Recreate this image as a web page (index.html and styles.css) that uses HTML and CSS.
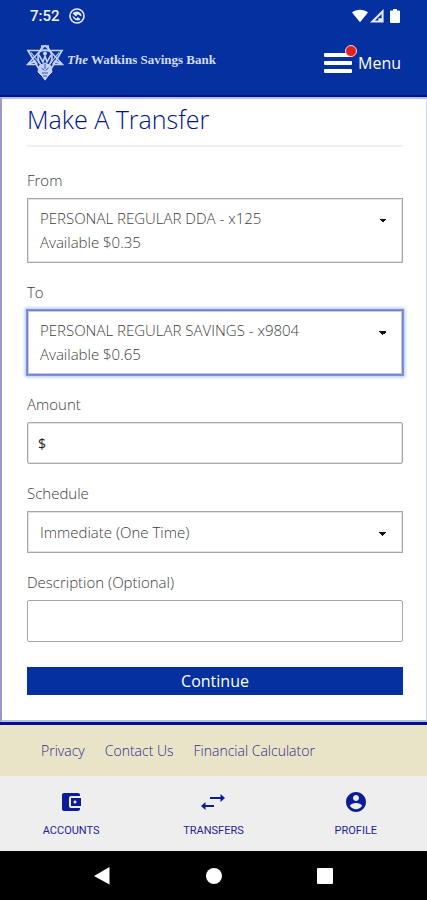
FILE: index.html
```html
<!DOCTYPE html>
<html lang="en">
<head>
    <meta charset="UTF-8">
    <meta name="viewport" content="width=device-width, initial-scale=1.0">
    <title>Make A Transfer</title>
    <link rel="stylesheet" href="styles.css">
</head>
<body>
    <header class="header">
        <!-- Phone status bar -->
        <div class="status-bar">
            <span class="time">7:52</span>
            <svg class="status-dnd" width="16" height="16" viewBox="0 0 16 16">
                <circle cx="8" cy="8" r="7" fill="none" stroke="#e6ecff" stroke-width="1.6"/>
                <path d="M3.6 5.6A5 5 0 0 1 12.6 8.6L8.8 6.2 7 8.4z" fill="#e6ecff"/>
                <path d="M3.4 7.6l3.8 3.2 1.6-1.8 2.8 2.2A5 5 0 0 1 3.4 7.6z" fill="#e6ecff"/>
            </svg>
            <div class="status-icons">
                <svg width="16" height="14" viewBox="0 0 16 14">
                    <path d="M0 3.6C4.4-.2 11.600-.2 16 3.600L8 13.200z" fill="#fff"/>
                </svg>
                <svg width="14" height="14" viewBox="0 0 14 14">
                    <path d="M13.600 0v13.600H0zM11.600 5L5 11.600h3.400V9.200h3.200z" fill="#e6ecff" fill-rule="evenodd"/>
                </svg>
                <svg class="battery" width="10" height="14" viewBox="0 0 10 14">
                    <path d="M3 0h4v1.500h2q1 0 1 1V13q0 1-1 1H1q-1 0-1-1V2.500q0-1 1-1h2z" fill="#fff"/>
                </svg>
            </div>
        </div>

        <div class="brand-bar">
            <a href="#" class="brand">
                <svg width="38" height="38" viewBox="0 0 38 38" fill="none" stroke="#c5d0f4">
                    <path d="M2 6.500h34L19 35z" stroke-width="1.700"/>
                    <path d="M19 1.500L1.500 20.500h9M19 1.500l17.500 19h-9" stroke-width="1.400"/>
                    <path d="M5 8.500l8 10M33 8.500l-8 10" stroke-width="1.200"/>
                    <path d="M15 2h8M14.500 6l2-4M23.500 6l-2-4" stroke-width="1.600"/>
                    <path d="M12 13q0-7 7-7t7 7q0 5-3 8h-8q-3-3-3-8z" stroke-width="1.600"/>
                    <path d="M13 11l4 7 2-6 2 6 4-7" stroke-width="1.600"/>
                    <circle cx="19" cy="9.500" r="2" fill="#c5d0f4" stroke="none"/>
                    <path d="M3 19.500l6-2 2 3M35 19.500l-6-2-2 3" stroke-width="2"/>
                    <path d="M13 22l6-3 6 3 1 6-4 4-3 4-3-4-4-4z" fill="#c5d0f4" stroke-width="1"/>
                    <path d="M15.500 24l3 2.500M22.500 24l-3 2.500M16 29h6M19 20v5M17 32h4" stroke="#3553b5" stroke-width="1"/>
                </svg>
                <span class="brand-name"><i>The</i> Watkins Savings Bank</span>
            </a>
            <button type="button" class="menu-button">
                <span class="hamburger">
                    <svg width="28" height="20" viewBox="0 0 28 20" fill="#fff">
                        <rect y="0" width="28" height="4" rx="1"/>
                        <rect y="8" width="28" height="4" rx="1"/>
                        <rect y="16" width="28" height="4" rx="1"/>
                    </svg>
                    <span class="badge"></span>
                </span>
                Menu
            </button>
        </div>
    </header>

    <main class="content">
        <h1>Make A Transfer</h1>

        <form class="transfer-form">
            <div class="input-group">
                <label for="fromAccount">From</label>
                <div class="account-box">
                    <select id="fromAccount" aria-describedby="fromAvailable">
                        <option>PERSONAL REGULAR DDA - x125</option>
                    </select>
                    <p class="available" id="fromAvailable">Available $0.35</p>
                </div>
            </div>

            <div class="input-group">
                <label for="toAccount">To</label>
                <div class="account-box active">
                    <select id="toAccount" aria-describedby="toAvailable">
                        <option>PERSONAL REGULAR SAVINGS - x9804</option>
                    </select>
                    <p class="available" id="toAvailable">Available $0.65</p>
                </div>
            </div>

            <div class="input-group">
                <label for="amount">Amount</label>
                <div class="amount-box">
                    <span>$</span>
                    <input type="text" id="amount" inputmode="decimal">
                </div>
            </div>

            <div class="input-group">
                <label for="schedule">Schedule</label>
                <select id="schedule" class="field">
                    <option>Immediate (One Time)</option>
                </select>
            </div>

            <div class="input-group">
                <label for="description">Description (Optional)</label>
                <input type="text" id="description" class="field rounded">
            </div>

            <button type="submit" class="continue">Continue</button>
        </form>
    </main>

    <footer class="footer">
        <a href="#">Privacy</a>
        <a href="#">Contact Us</a>
        <a href="#">Financial Calculator</a>
    </footer>

    <nav class="tabs">
        <a href="#">
            <svg width="24" height="24" viewBox="0 0 24 24" fill="#0a1c9c">
                <path d="M21 18v1c0 1.100-.9 2-2 2H5c-1.110 0-2-.9-2-2V5c0-1.100.89-2 2-2h14c1.100 0 2 .9 2 2v1h-9c-1.110 0-2 .9-2 2v8c0 1.100.89 2 2 2h9zm-9-2h10V8H12v8zm4-2.500c-.83 0-1.500-.67-1.500-1.500s.67-1.500 1.500-1.500 1.500.67 1.500 1.500-.67 1.500-1.500 1.500z"/>
            </svg>
            Accounts
        </a>
        <a href="#">
            <svg width="24" height="24" viewBox="0 0 24 24" fill="#0a1c9c">
                <path d="M4.500 12L0 16l4.500 4v-3H13v-2H4.500zM24 8l-4.500-4v3H9v2h10.500v3z"/>
            </svg>
            Transfers
        </a>
        <a href="#">
            <svg width="24" height="24" viewBox="0 0 24 24" fill="#0a1c9c">
                <path d="M12 2C6.480 2 2 6.480 2 12s4.480 10 10 10 10-4.480 10-10S17.520 2 12 2zm0 3c1.660 0 3 1.340 3 3s-1.340 3-3 3-3-1.340-3-3 1.340-3 3-3zm0 14.200c-2.500 0-4.710-1.280-6-3.220.03-1.990 4-3.080 6-3.080 1.990 0 5.970 1.090 6 3.080-1.290 1.940-3.500 3.220-6 3.220z"/>
            </svg>
            Profile
        </a>
    </nav>

    <!-- Phone navigation keys -->
    <div class="system-nav">
        <button type="button" aria-label="Back">
            <svg width="16" height="18" viewBox="0 0 16 18" fill="#fff"><path d="M15.500 0v17.500L0 9z"/></svg>
        </button>
        <button type="button" aria-label="Home">
            <svg width="16" height="16" viewBox="0 0 16 16" fill="#fff"><circle cx="8" cy="8" r="8"/></svg>
        </button>
        <button type="button" aria-label="Recent apps">
            <svg width="16" height="16" viewBox="0 0 16 16" fill="#fff"><rect width="16" height="16" rx="1"/></svg>
        </button>
    </div>
</body>
</html>
```

FILE: styles.css
```css
:root {
    --primary-color: #0530a0;
    --dark-blue: #00108f;
    --text-color: #3c3c3c;
    --input-border: #a8a8a8;
}

* {
    margin: 0;
    padding: 0;
    box-sizing: border-box;
}

body {
    min-height: 100vh;
    display: flex;
    flex-direction: column;
    background: #000;
    color: var(--text-color);
    font-family: 'Open Sans', sans-serif;
    font-size: 15px;
    font-weight: 300;
}

a {
    text-decoration: none;
}

svg {
    display: block;
}

button,
input,
select {
    font: inherit;
    color: inherit;
}

button {
    border: none;
    cursor: pointer;
}

/* Header */
.header {
    background: var(--primary-color);
    border-bottom: 2px solid var(--dark-blue);
}

.status-bar {
    display: flex;
    align-items: center;
    gap: 9px;
    height: 32px;
    padding: 0 27px 0 30px;
    color: #f0f4ff;
}

.time {
    font-family: Roboto, sans-serif;
    font-size: 15px;
    font-weight: 500;
}

.status-icons {
    display: flex;
    align-items: center;
    gap: 2px;
    margin-left: auto;
}

.battery {
    margin-left: 4px;
}

.brand-bar {
    display: flex;
    align-items: center;
    justify-content: space-between;
    height: 63px;
    padding: 0 26px 2px;
}

.brand {
    display: flex;
    align-items: center;
    gap: 3px;
    color: #d3dbf7;
}

.brand-name {
    padding-bottom: 6px;
    font-family: 'Liberation Serif', serif;
    font-size: 13px;
    font-weight: bold;
}

.menu-button {
    display: flex;
    align-items: center;
    gap: 6px;
    background: none;
    color: #fff;
    font-size: 16px;
    font-weight: 400;
}

.hamburger {
    position: relative;
}

.badge {
    position: absolute;
    top: -8px;
    right: -5px;
    width: 12px;
    height: 12px;
    border: 1px solid #f5d5de;
    border-radius: 50%;
    background: #e4201c;
}

/* Transfer form */
.content {
    padding: 5px 23px 25px 25px;
    background: #fff;
    border: 2px solid #b9bce6;
    border-left-color: #9a9ad0;
    border-right: 1px solid #d5d9f2;
}

h1 {
    margin-bottom: 23px;
    padding-bottom: 11px;
    border-bottom: 2px solid #efefef;
    color: var(--dark-blue);
    font-size: 25px;
    font-weight: 300;
    line-height: 30px;
}

.input-group {
    margin-bottom: 19px;
}

label {
    display: block;
    margin-bottom: 8px;
    line-height: 20px;
}

select {
    display: block;
    width: 100%;
    appearance: none;
    border: none;
    background: none;
    cursor: pointer;
}

.account-box,
.amount-box,
.field {
    width: 100%;
    border: 1px solid var(--input-border);
    background: #fff;
}

.account-box,
.amount-box,
select.field {
    box-shadow: inset 0 0 0 1px #e2e2e2;
}

/* Caret at the right end of a drop-down */
.account-box select,
select.field {
    background-image: linear-gradient(to bottom right, #111 50%, transparent 50%), linear-gradient(to bottom left, #111 50%, transparent 50%);
    background-size: 4px 4px;
    background-repeat: no-repeat;
}

.account-box {
    padding: 7px 12px;
}

.account-box select {
    height: 24px;
    background-position: right 3px top 13px, right 7px top 13px;
}

.account-box.active {
    border-color: #7483cf;
    box-shadow: 0 0 0 1px #7d92e3, 0 0 3px 2px #a9c0fb, inset 0 0 0 1px #cfc9d4;
}

.available {
    line-height: 25px;
}

.amount-box {
    display: flex;
    align-items: center;
    gap: 6px;
    height: 42px;
    padding: 0 10px;
    border-radius: 2px;
    color: #222;
    font-size: 14px;
    font-weight: 400;
}

.amount-box input {
    flex: 1;
    min-width: 0;
    border: none;
    outline: none;
    background: none;
}

.field {
    height: 42px;
    padding: 0 12px;
}

select.field {
    background-position: right 15px top 20px, right 19px top 20px;
}

.rounded {
    border-radius: 2px;
}

.continue {
    display: block;
    width: 100%;
    height: 28px;
    margin-top: 25px;
    background: var(--primary-color);
    color: #fff;
    font-size: 16px;
    font-weight: 400;
    line-height: 28px;
}

/* Footer links */
.footer {
    display: flex;
    gap: 20px;
    padding: 16px 41px 15px;
    background: #e8e4c8;
    border-top: 3px solid var(--dark-blue);
}

.footer a {
    color: #332a92;
    font-size: 14px;
    line-height: 20px;
}

/* Bottom tabs */
.tabs {
    display: grid;
    grid-template-columns: repeat(3, 1fr);
    height: 75px;
    background: #eee;
}

.tabs a {
    display: flex;
    flex-direction: column;
    align-items: center;
    gap: 10px;
    padding-top: 14px;
    color: #221f96;
    font-family: Roboto, sans-serif;
    font-size: 11px;
    font-weight: 400;
    line-height: 14px;
    text-transform: uppercase;
}

.system-nav {
    display: flex;
    align-items: center;
    justify-content: space-between;
    height: 49px;
    padding: 0 94px;
}

.system-nav button {
    background: none;
}
```
